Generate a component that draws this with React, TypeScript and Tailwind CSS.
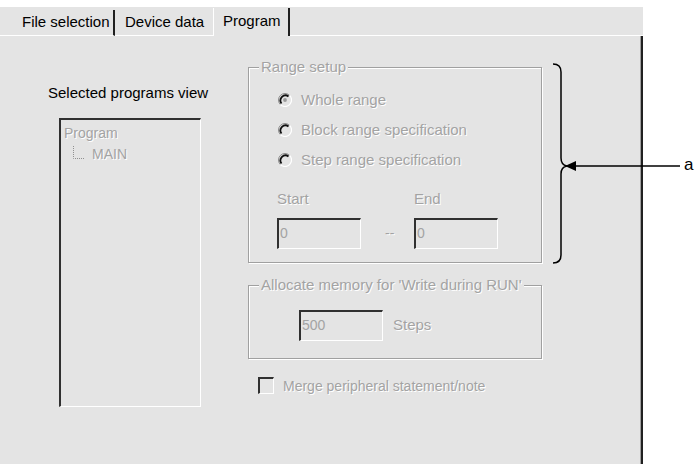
import React from 'react';

const FONT = { fontFamily: '"Liberation Sans", Arial, sans-serif' };

// disabled text in old Windows dialogs: gray with a white emboss
const dis = 'text-[#a3a3a3] [text-shadow:1px_1px_0_#ffffff]';

const Radio = ({ checked }: { checked?: boolean }) => (
  <svg width="14" height="14" viewBox="0 0 14 14" className="shrink-0">
    <circle cx="7" cy="7" r="6" fill="#e4e4e4" />
    <path d="M11.6 2.4 A6.5 6.5 0 0 0 2.4 11.6" stroke="#8a8a8a" strokeWidth="1" fill="none" />
    <path d="M10.5 3.5 A5 5 0 0 0 3.5 10.5" stroke="#101010" strokeWidth="1.8" fill="none" />
    <path d="M2.4 11.6 A6.5 6.5 0 0 0 11.6 2.4" stroke="#ffffff" strokeWidth="1.2" fill="none" />
    {checked && <circle cx="7" cy="7" r="1.9" fill="#9a9a9a" />}
  </svg>
);

const Sunken = ({ value, w }: { value: string; w: string }) => (
  <div
    className={`${w} h-[31px] border-t-2 border-l-2 border-t-[#303030] border-l-[#303030] border-b border-r border-b-white border-r-white bg-[#e4e4e4] pl-[1px] pt-[3px] text-[14px] text-[#a3a3a3]`}
  >
    {value}
  </div>
);

const Group = ({ label, className, children }: { label: string; className: string; children: React.ReactNode }) => (
  <div
    className={`relative border border-[#a0a0a0] shadow-[inset_1px_1px_0_#ffffff,1px_1px_0_#ffffff] ${className}`}
  >
    <span className={`absolute -top-[10px] left-[10px] bg-[#e4e4e4] px-[2px] text-[15px] leading-[18px] ${dis}`}>
      {label}
    </span>
    {children}
  </div>
);

export default function App() {
  return (
    <div className="relative h-[464px] w-[700px] overflow-hidden bg-white" style={FONT}>
      <div className="mt-[7px] flex h-[457px] w-[643px] flex-col bg-[#e4e4e4]">
        {/* tab strip */}
        <div className="flex h-[29px] items-end text-[15px] leading-[18px] text-black">
          <div className="h-[26px] w-[16px] border-b border-b-white" />
          <div className="flex h-[26px] w-[99px] items-center border-r-2 border-b border-r-[#202020] border-b-white pl-[6px] pb-[1px]">
            File selection
          </div>
          <div className="flex h-[26px] w-[98px] items-center border-b border-b-white pl-[10px] pb-[1px]">
            Device data
          </div>
          <div className="flex h-[28px] w-[77px] items-start border-l border-r-2 border-l-white border-r-[#202020] pl-[9px] pt-[4px]">
            Program
          </div>
          <div className="h-[26px] flex-1 border-b border-b-white" />
        </div>

        {/* panel */}
        <div className="flex flex-1 border-r-2 border-r-[#202020] shadow-[inset_-1px_0_0_#a0a0a0]">
          {/* left column */}
          <div className="flex w-[248px] flex-col pl-[48px] pt-[48px]">
            <span className="text-[15px] leading-[18px] text-black">Selected programs view</span>
            <div className="ml-[11px] mt-[16px] h-[289px] w-[142px] border-t-2 border-l-2 border-t-[#303030] border-l-[#303030] border-b border-r border-b-white border-r-white px-[3px] pt-[5px] text-[14px] leading-[16px]">
              <div className={dis}>Program</div>
              <div className="mt-[5px] flex items-end">
                <svg width="20" height="16" className="ml-[8px] shrink-0">
                  <path d="M1.5 0 V12.5 H12" stroke="#909090" strokeDasharray="1 1" fill="none" />
                </svg>
                <span className={dis}>MAIN</span>
              </div>
            </div>
          </div>

          {/* right column */}
          <div className="flex flex-col pt-[31px]">
            <Group label="Range setup" className="h-[196px] w-[294px]">
              <div className="flex flex-col gap-[14px] pl-[29px] pt-[24px]">
                {['Whole range', 'Block range specification', 'Step range specification'].map((t, i) => (
                  <div key={t} className="flex h-[16px] items-center gap-[9px]">
                    <Radio checked={i === 0} />
                    <span className={`text-[15px] leading-[18px] ${dis}`}>{t}</span>
                  </div>
                ))}
              </div>
              <div className="mt-[22px] flex pl-[28px]">
                <div className="flex w-[137px] flex-col gap-[10px]">
                  <span className={`text-[15px] leading-[18px] ${dis}`}>Start</span>
                  <div className="flex items-center">
                    <Sunken value="0" w="w-[84px]" />
                    <span className={`ml-[24px] text-[14px] ${dis}`}>--</span>
                  </div>
                </div>
                <div className="flex flex-col gap-[10px]">
                  <span className={`text-[15px] leading-[18px] ${dis}`}>End</span>
                  <Sunken value="0" w="w-[84px]" />
                </div>
              </div>
            </Group>

            <Group label="Allocate memory for 'Write during RUN'" className="mt-[22px] h-[74px] w-[294px]">
              <div className="flex items-center pl-[50px] pt-[24px]">
                <Sunken value="500" w="w-[84px]" />
                <span className={`ml-[10px] text-[15px] ${dis}`}>Steps</span>
              </div>
            </Group>

            <div className="ml-[10px] mt-[18px] flex items-center gap-[9px]">
              <div className="h-[17px] w-[16px] border-t-2 border-l-2 border-t-[#303030] border-l-[#303030] border-b border-r border-b-white border-r-white" />
              <span className={`text-[14px] leading-[16px] ${dis}`}>Merge peripheral statement/note</span>
            </div>
          </div>
        </div>
      </div>

      {/* annotation: bracket + arrow + label */}
      <svg width="150" height="210" className="absolute left-[550px] top-[60px]" viewBox="0 0 150 210">
        <path
          d="M3 4 Q11 4 11 12 V98 Q11 105 17 106 Q11 107 11 114 V195 Q11 203 3 203"
          stroke="#000"
          strokeWidth="1.5"
          fill="none"
        />
        <path d="M24 106 H130" stroke="#000" strokeWidth="1.5" />
        <path d="M15 106 L26 101 L26 111 Z" fill="#000" />
      </svg>
      <span className="absolute left-[684px] top-[155px] text-[17px] leading-[20px] text-black">a</span>
    </div>
  );
}
